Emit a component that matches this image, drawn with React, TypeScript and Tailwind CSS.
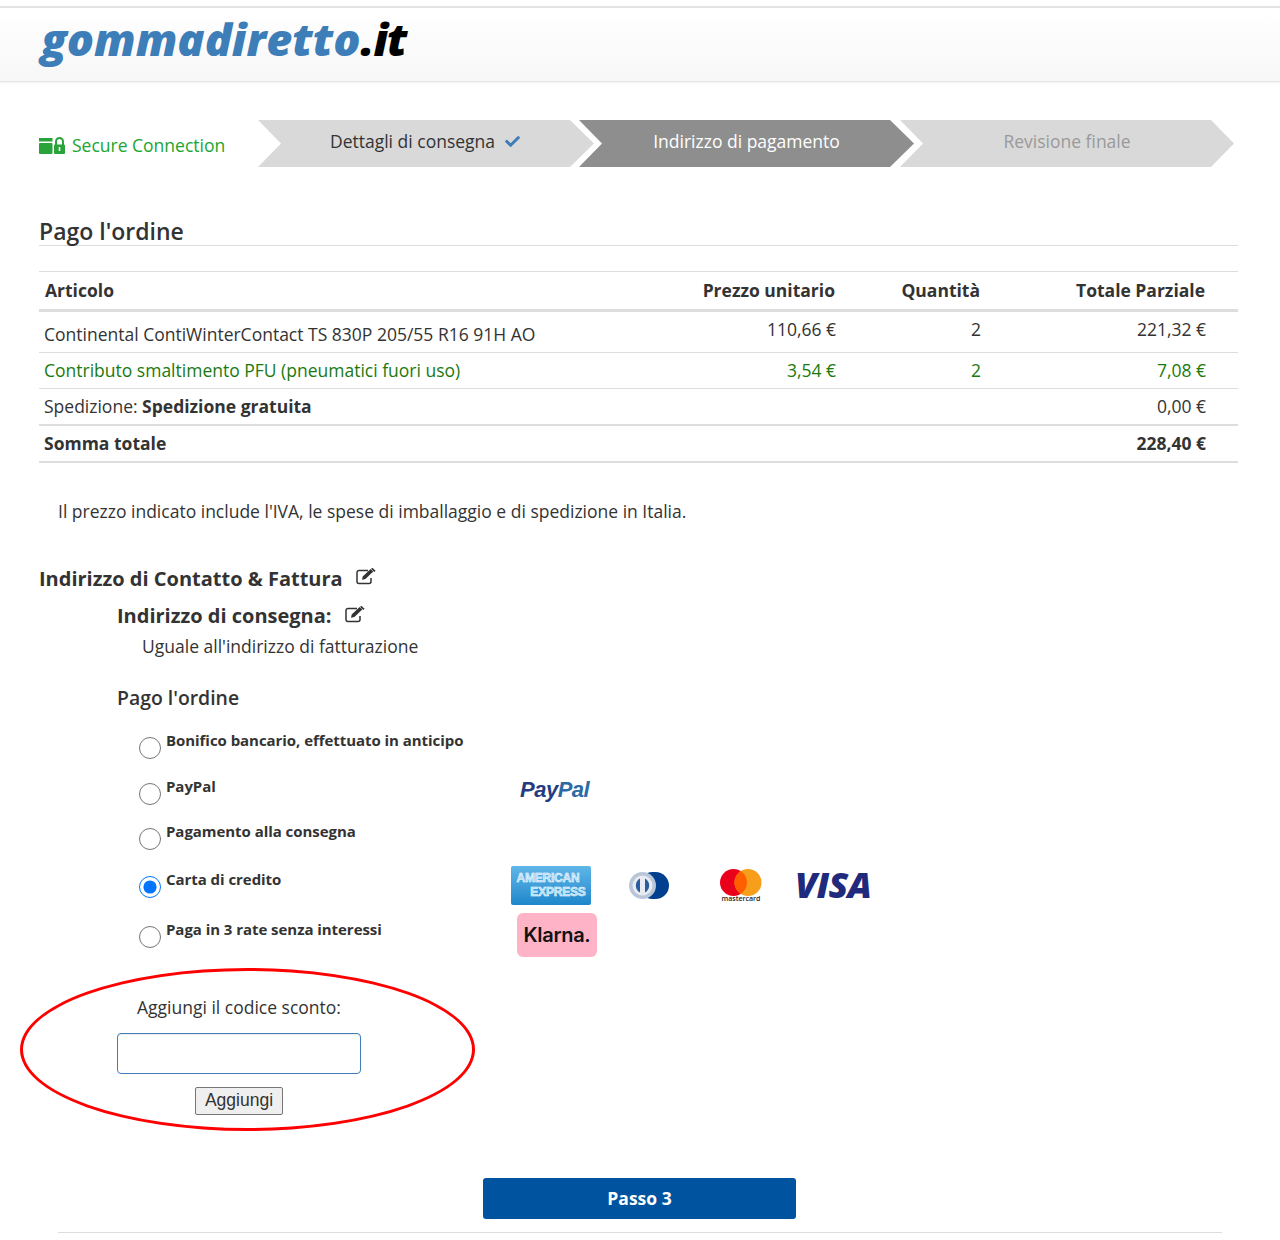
import { FaCheck } from 'react-icons/fa';

const PaymentRow = ({ label, checked, height, children }: { label: string; checked?: boolean; height: string; children?: React.ReactNode }) => (
  <div className={`flex ${height}`}>
    <input type="radio" name="payment" defaultChecked={checked} className="w-[22px] h-[22px] mt-[8px] ml-[22px] m-0 shrink-0" />
    <div className="ml-[5px] mt-[1px] w-[355px] shrink-0 text-[15px] leading-[20px] font-bold tracking-[-0.05px]">{label}</div>
    {children}
  </div>
);

const EditIcon = ({ className }: { className: string }) => (
  <svg width="20" height="17" viewBox="0 0 20 17" className={`ml-[13px] shrink-0 ${className}`}>
    <path d="M15 10v3.5a2 2 0 0 1-2 2H3a2 2 0 0 1-2-2V4.5a2 2 0 0 1 2-2h9" fill="none" stroke="#333" strokeWidth="1.5" />
    <path d="M6 11.8l.7-3.3L14.6.9l2.7 2.7-7.9 7.5zM15.6 0l1-.0 3 2.8-1.3 1.2-2.9-2.9z" fill="#333" />
  </svg>
);

const PayPalLogo = () => (
  <div className="ml-[-1px] text-[22px] leading-[30px] font-extrabold italic tracking-[-0.5px] font-['Liberation_Sans',sans-serif]">
    <span className="text-[#253b80]">Pay</span>
    <span className="text-[#2c6aa5]">Pal</span>
  </div>
);

const CardLogos = () => (
  <div className="flex items-start mt-[-2px] ml-[-10px]">
    <div className="w-[80px] h-[39px] rounded-[2px] bg-gradient-to-b from-[#5fb6e8] to-[#1b87cb] flex flex-col items-center justify-center text-[#a5d8f5] [-webkit-text-stroke:0.5px_#fff] font-['Liberation_Sans',sans-serif] font-bold text-[12px] leading-[14px] tracking-[-0.2px]">
      <span className="mr-[6px]">AMERICAN</span>
      <span className="ml-[14px]">EXPRESS</span>
    </div>
    <svg width="40" height="27" viewBox="0 0 40 27" className="ml-[38px] mt-[6px]">
      <rect x="10" y="0" width="30" height="27" rx="13.5" fill="#00408f" />
      <circle cx="13.5" cy="13.5" r="13.5" fill="#b9c6d8" />
      <circle cx="13.5" cy="13.5" r="10" fill="#e8ecf2" />
      <path d="M11 6.5v14a8 8 0 0 1 0-14zM16 6.5a8 8 0 0 1 0 14z" fill="#2a5ca0" />
    </svg>
    <div className="ml-[51px] w-[42px] flex flex-col items-center mt-[3px]">
      <svg width="42" height="27" viewBox="0 0 42 27">
        <circle cx="13.5" cy="13.5" r="13.5" fill="#eb001b" />
        <circle cx="28" cy="13.5" r="13.5" fill="#f79e1b" />
        <path d="M20.75 2.1a13.5 13.5 0 0 1 0 22.8a13.5 13.5 0 0 1 0-22.8z" fill="#ff5f00" />
      </svg>
      <span className="mt-[-1px] text-[7px] leading-[7px] font-semibold text-[#222] whitespace-nowrap">mastercard</span>
    </div>
    <div className="ml-[33px] mt-[-1px] text-[36px] leading-[40px] font-extrabold italic text-[#1f2a7c] tracking-[-0.7px] font-['Open_Sans',sans-serif]">VISA</div>
  </div>
);

const KlarnaLogo = () => (
  <div className="w-[80px] h-[44px] ml-[-4px] mt-[-5px] rounded-[6px] bg-[#ffb3c7] flex items-center justify-center text-[#111] text-[20px] font-semibold tracking-[-0.3px] font-['Inter',sans-serif]">
    Klarna.
  </div>
);

const SecureIcon = () => (
  <svg width="26" height="18" viewBox="0 0 26 18" className="shrink-0">
    <rect x="0" y="1" width="13.5" height="3.5" fill="#2aa33a" />
    <rect x="0" y="6" width="13.5" height="11" rx="1" fill="#2aa33a" />
    <path d="M17 8V4.5a3.5 3.5 0 0 1 7 0V8" fill="none" stroke="#2aa33a" strokeWidth="2" />
    <rect x="15" y="7.5" width="11" height="9.5" rx="1" fill="#2aa33a" />
    <rect x="19.7" y="10" width="1.6" height="4" fill="#fff" />
  </svg>
);

export default function App() {
  return (
    <div className="relative w-[1280px] h-[1240px] overflow-hidden bg-white text-[#333] font-['Open_Sans',sans-serif] text-[17.5px]">
      {/* Header */}
      <div className="h-[6px] bg-white" />
      <div className="h-[76px] border-t-2 border-b border-[#e3e3e3] bg-gradient-to-b from-white to-[#f7f7f7] shadow-[0_1px_3px_rgba(0,0,0,0.06)] pl-[41px]">
        <div className="text-[45px] leading-[62px] font-extrabold italic whitespace-nowrap">
          <span className="text-[#3d7eb8]">gommadiretto</span>
          <span className="text-black tracking-[-1px]">.it</span>
        </div>
      </div>

      {/* Steps */}
      <div className="flex mt-[38px] ml-[39px] h-[47px]">
        <div className="w-[219px] flex items-center gap-[7px] pt-[5px] text-[#1aa62f] leading-none">
          <SecureIcon />
          <span>Secure Connection</span>
        </div>
        <div className="w-[336px] pb-[5px] pr-[2px] bg-[#d9d9d9] flex items-center justify-center gap-[10px] [clip-path:polygon(0_0,312px_0,100%_50%,312px_100%,0_100%,23px_50%)]">
          <span>Dettagli di consegna</span>
          <FaCheck className="text-[#3d7eb8] text-[15px]" />
        </div>
        <div className="w-[335px] ml-[-15px] pb-[5px] bg-[#8e8e8e] text-white flex items-center justify-center [clip-path:polygon(0_0,311px_0,100%_50%,311px_100%,0_100%,23px_50%)]">
          Indirizzo di pagamento
        </div>
        <div className="w-[334px] ml-[-14px] pb-[5px] bg-[#d9d9d9] text-[#999] flex items-center justify-center [clip-path:polygon(0_0,311px_0,100%_50%,311px_100%,0_100%,23px_50%)]">
          Revisione finale
        </div>
      </div>

      {/* Order */}
      <div className="mx-[39px] w-[1199px]">
        <h2 className="mt-[47px] h-[32px] text-[23px] leading-[34px] font-semibold border-b border-[#ddd]">Pago l'ordine</h2>
        <table className="mt-[25px] w-full border-collapse table-fixed">
          <colgroup>
            <col className="w-[640px]" />
            <col className="w-[157px]" />
            <col className="w-[145px]" />
            <col />
          </colgroup>
          <thead>
            <tr className="h-[39px] border-t border-b-[3px] border-[#ddd]">
              <th className="pl-[6px] text-left font-bold">Articolo</th>
              <th className="pr-[1px] text-right font-bold">Prezzo unitario</th>
              <th className="pr-[1px] text-right font-bold">Quantità</th>
              <th className="pr-[33px] text-right font-bold">Totale Parziale</th>
            </tr>
          </thead>
          <tbody>
            <tr className="h-[42px] border-b border-[#ddd]">
              <td className="pl-[5px] pt-[5px]">Continental ContiWinterContact TS 830P 205/55 R16 91H AO</td>
              <td className="text-right align-top pt-[4px]">110,66 €</td>
              <td className="text-right align-top pt-[4px]">2</td>
              <td className="pr-[32px] text-right align-top pt-[4px]">221,32 €</td>
            </tr>
            <tr className="h-[36px] border-b border-[#ddd] text-[#1a7a0f]">
              <td className="pl-[5px]">Contributo smaltimento PFU (pneumatici fuori uso)</td>
              <td className="text-right">3,54 €</td>
              <td className="text-right">2</td>
              <td className="pr-[32px] text-right">7,08 €</td>
            </tr>
            <tr className="h-[36px] border-b-2 border-[#ddd]">
              <td className="pl-[5px]">Spedizione: <span className="font-bold">Spedizione gratuita</span></td>
              <td />
              <td />
              <td className="pr-[32px] text-right">0,00 €</td>
            </tr>
            <tr className="h-[37px] border-b-2 border-[#ddd]">
              <td className="pl-[5px] font-bold">Somma totale</td>
              <td />
              <td />
              <td className="pr-[32px] text-right font-bold">228,40 €</td>
            </tr>
          </tbody>
        </table>
        <p className="mt-[35px] ml-[19px] leading-[26px]">Il prezzo indicato include l'IVA, le spese di imballaggio e di spedizione in Italia.</p>

        {/* Addresses */}
        <div className="mt-[41px] flex items-center text-[20px] leading-[28px] font-bold">
          Indirizzo di Contatto &amp; Fattura
          <EditIcon className="mt-[-4px]" />
        </div>
        <div className="mt-[9px] ml-[78px] flex items-center text-[20px] leading-[28px] font-bold">
          Indirizzo di consegna:
          <EditIcon className="mt-[-2px]" />
        </div>
        <p className="ml-[103px] mt-[3px] leading-[26px]">Uguale all'indirizzo di fatturazione</p>

        {/* Payment */}
        <div className="ml-[78px]">
          <h3 className="mt-[25px] text-[19.4px] leading-[28px] font-semibold">Pago l'ordine</h3>
          <div className="mt-[17px]">
            <PaymentRow label="Bonifico bancario, effettuato in anticipo" height="h-[46px]" />
            <PaymentRow label="PayPal" height="h-[45px]">
              <PayPalLogo />
            </PaymentRow>
            <PaymentRow label="Pagamento alla consegna" height="h-[48px]" />
            <PaymentRow label="Carta di credito" checked height="h-[50px]">
              <CardLogos />
            </PaymentRow>
            <PaymentRow label="Paga in 3 rate senza interessi" height="h-[40px]">
              <KlarnaLogo />
            </PaymentRow>
          </div>

          {/* Discount code */}
          <div className="mt-[36px] w-[244px] flex flex-col items-center">
            <label className="leading-[26px]">Aggiungi il codice sconto:</label>
            <input type="text" className="mt-[13px] w-[244px] h-[41px] bg-white border border-[#3d7eb8] rounded-[4px] shadow-[inset_0_1px_1px_rgba(0,0,0,0.075)]" />
            <button className="mt-[13px] w-[88px] h-[28px] bg-[#efefef] border border-[#767676] rounded-[2px] text-[17.5px] leading-none font-['Liberation_Sans',sans-serif]">Aggiungi</button>
          </div>
        </div>
      </div>

      {/* Submit */}
      <div className="flex justify-center mt-[63px]">
        <button className="w-[313px] h-[41px] ml-[-1px] bg-[#00549f] text-white font-bold rounded-[3px]">Passo 3</button>
      </div>
      <div className="mt-[13px] mx-[58px] border-t border-[#ddd]" />

      {/* Red annotation round the discount code */}
      <div className="absolute left-[20px] top-[968px] w-[455px] h-[163px] rounded-[50%] border-[3px] border-[#f00]" />
    </div>
  );
}
